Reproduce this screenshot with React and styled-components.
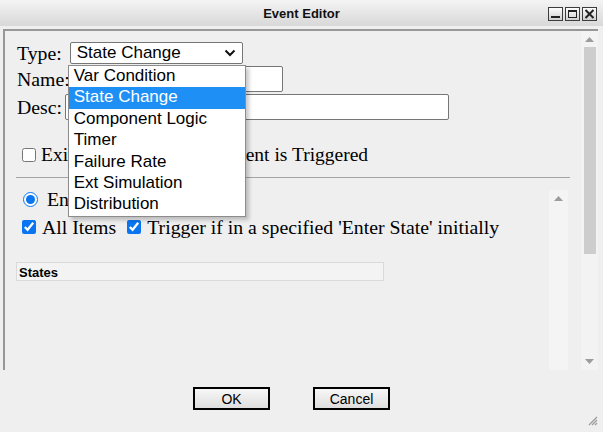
import React from 'react'
import styled, { createGlobalStyle } from 'styled-components'

const GlobalStyle = createGlobalStyle`
  body {
    margin: 0;
    background: #efefef;
    font-family: "Liberation Serif", "Times New Roman", serif;
  }
`

const Window = styled.div`
  position: relative;
  width: 603px;
  height: 432px;
  overflow: hidden;
  background: #efefef;
  display: flex;
  flex-direction: column;
`

const TitleBar = styled.div`
  height: 26px;
  display: grid;
  grid-template-columns: 1fr auto 1fr;
  align-items: center;
  background: linear-gradient(#f4f4f4, #d8d8d8);
  font: bold 13px "Liberation Sans", Arial, sans-serif;
  color: #111;
`

const Title = styled.div`
  grid-column: 2;
  padding-top: 1px;
`

const WinButtons = styled.div`
  justify-self: end;
  display: flex;
  gap: 2px;
  padding-right: 6px;
  padding-top: 1px;
`

const WinButton = styled.div`
  width: 15px;
  height: 14px;
  box-sizing: border-box;
  border: 1px solid #3c3c3c;
  background: linear-gradient(#fdfdfd, #cfcfcf);
  display: flex;
  align-items: center;
  justify-content: center;
`

const Body = styled.div`
  padding: 3px 5px 0 3px;
`

const Panel = styled.div`
  height: 339px;
  border-top: 2px solid #979797;
  border-left: 2px solid #979797;
  display: flex;
`

const PanelMain = styled.div`
  flex: 1;
  padding: 11px 0 0 12px;
  display: flex;
  flex-direction: column;
  min-width: 0;
`

const Row = styled.div`
  display: flex;
  align-items: center;
  height: ${({ h }) => h || 22}px;
  margin-top: ${({ top }) => top || 0}px;
  color: #000;
  white-space: nowrap;
`

const Label = styled.span`
  font-size: ${({ size }) => size || 19.8}px;
  line-height: 20px;
`

const SelectWrap = styled.div`
  position: relative;
  margin-left: ${({ offset }) => offset}px;
`

const SelectBox = styled.div`
  width: 173px;
  height: 22px;
  box-sizing: border-box;
  border: 1px solid #767676;
  border-radius: 2px;
  background: #fff;
  display: flex;
  align-items: center;
  justify-content: space-between;
  padding: 0 6px 0 6px;
  font: 17px "Liberation Sans", Arial, sans-serif;
`

const Dropdown = styled.div`
  position: absolute;
  top: 23px;
  left: -2px;
  width: 178px;
  box-sizing: border-box;
  border: 1px solid #8c8c8c;
  background: #fff;
  box-shadow: 3px 3px 4px rgba(0, 0, 0, 0.22);
  z-index: 10;
`

const Option = styled.div`
  height: 21.4px;
  line-height: 21px;
  padding-left: 5px;
  font: 17px "Liberation Sans", Arial, sans-serif;
  background: ${({ selected }) => (selected ? '#1e8ff5' : '#fff')};
  color: ${({ selected }) => (selected ? '#fff' : '#000')};
`

const TextInput = styled.div`
  width: ${({ w }) => w}px;
  height: 26px;
  box-sizing: border-box;
  margin-left: ${({ offset }) => offset}px;
  border: 1px solid #767676;
  border-radius: 2px;
  background: #fff;
`

const Check = styled.input`
  width: ${({ size }) => size || 14}px;
  height: ${({ size }) => size || 14}px;
  margin: 0 ${({ mr }) => mr || 5}px 0 ${({ ml }) => ml || 5}px;
  accent-color: #0a75f0;
`

const Rule = styled.div`
  height: 1px;
  background: #a4a4a4;
  margin: 12px 11px 0 -1px;
`

const Inner = styled.div`
  flex: 1;
  display: flex;
  margin: 12px 13px 0 -1px;
  min-height: 0;
`

const InnerMain = styled.div`
  flex: 1;
  display: flex;
  flex-direction: column;
`

const InnerScroll = styled.div`
  width: 19px;
  background: #f4f4f4;
  display: flex;
  justify-content: center;
  padding-top: 6px;
`

const StatesHeader = styled.div`
  width: 368px;
  height: 19px;
  box-sizing: border-box;
  margin-top: 25px;
  border: 1px solid #dadada;
  background: #f3f3f3;
  font: bold 13px "Liberation Sans", Arial, sans-serif;
  padding: 2px 0 0 2px;
  color: #000;
`

const ScrollBar = styled.div`
  width: 17px;
  background: #f3f3f3;
  display: flex;
  flex-direction: column;
  align-items: center;
  padding: 6px 0 6px 0;
`

const Thumb = styled.div`
  width: 12px;
  height: 207px;
  margin-top: 5px;
  background: #cdcdcd;
`

const Spacer = styled.div`
  flex: 1;
`

const ButtonRow = styled.div`
  display: flex;
  justify-content: center;
  gap: 43px;
  padding: 17px 18px 0 0;
`

const Button = styled.button`
  width: 77px;
  height: 23px;
  box-sizing: border-box;
  border: 2px solid #000;
  border-radius: 0;
  background: linear-gradient(#f7f7f7, #dedede);
  font: 14px "Liberation Sans", Arial, sans-serif;
  color: #000;
  padding: 0;
`

const Grip = styled.svg`
  position: absolute;
  right: 5px;
  bottom: 6px;
`

const Arrow = ({ down }) => (
  <svg width="9" height="5" viewBox="0 0 9 5">
    <path d={down ? 'M0 0H9L4.5 5Z' : 'M0 5H9L4.5 0Z'} fill="#9c9c9c" />
  </svg>
)

const options = [
  'Var Condition',
  'State Change',
  'Component Logic',
  'Timer',
  'Failure Rate',
  'Ext Simulation',
  'Distribution'
]

export default function App() {
  return (
    <>
      <GlobalStyle />
      <Window>
        <TitleBar>
          <Title>Event Editor</Title>
          <WinButtons>
            <WinButton>
              <svg width="11" height="10"><rect x="1" y="7" width="9" height="2" fill="#222" /></svg>
            </WinButton>
            <WinButton>
              <svg width="11" height="10"><rect x="1.5" y="1.5" width="8" height="7" fill="none" stroke="#222" strokeWidth="1" /><rect x="1" y="1" width="9" height="2" fill="#222" /></svg>
            </WinButton>
            <WinButton>
              <svg width="11" height="10"><path d="M1.5 1L9.5 9M9.5 1L1.5 9" stroke="#222" strokeWidth="2" /></svg>
            </WinButton>
          </WinButtons>
        </TitleBar>
        <Body>
          <Panel>
            <PanelMain>
              <Row h={22}>
                <Label>Type:</Label>
                <SelectWrap offset={8}>
                  <SelectBox>
                    State Change
                    <svg width="12" height="8" viewBox="0 0 12 8">
                      <path d="M1.5 1.5L6 6L10.5 1.5" fill="none" stroke="#111" strokeWidth="2" />
                    </svg>
                  </SelectBox>
                  <Dropdown>
                    {options.map(o => (
                      <Option key={o} selected={o === 'State Change'}>{o}</Option>
                    ))}
                  </Dropdown>
                </SelectWrap>
              </Row>
              <Row h={26} top={2}>
                <Label>Name:</Label>
                <TextInput offset={3} w={210} />
              </Row>
              <Row h={26} top={2}>
                <Label>Desc:</Label>
                <TextInput offset={3} w={384} />
              </Row>
              <Row h={20} top={25}>
                <Check type="checkbox" readOnly />
                <Label size={19.5}>Exit Parent State when Event is Triggered</Label>
              </Row>
              <Rule />
              <Inner>
                <InnerMain>
                  <Row h={18} top={0}>
                    <Check type="radio" checked readOnly size={15} ml={7} mr={9} />
                    <Label>Enter State</Label>
                  </Row>
                  <Row h={20} top={9}>
                    <Check type="checkbox" checked readOnly ml={6} mr={6} />
                    <Label>All Items</Label>
                    <Check type="checkbox" checked readOnly ml={11} mr={6} />
                    <Label>Trigger if in a specified 'Enter State' initially</Label>
                  </Row>
                  <StatesHeader>States</StatesHeader>
                </InnerMain>
                <InnerScroll>
                  <Arrow />
                </InnerScroll>
              </Inner>
            </PanelMain>
            <ScrollBar>
              <Arrow />
              <Thumb />
              <Spacer />
              <Arrow down />
            </ScrollBar>
          </Panel>
          <ButtonRow>
            <Button>OK</Button>
            <Button>Cancel</Button>
          </ButtonRow>
        </Body>
        <Grip width="11" height="11" viewBox="0 0 11 11">
          <path d="M10 2L2 10M10 5L5 10M10 8L8 10" stroke="#9a9a9a" strokeWidth="1.2" />
        </Grip>
      </Window>
    </>
  )
}
